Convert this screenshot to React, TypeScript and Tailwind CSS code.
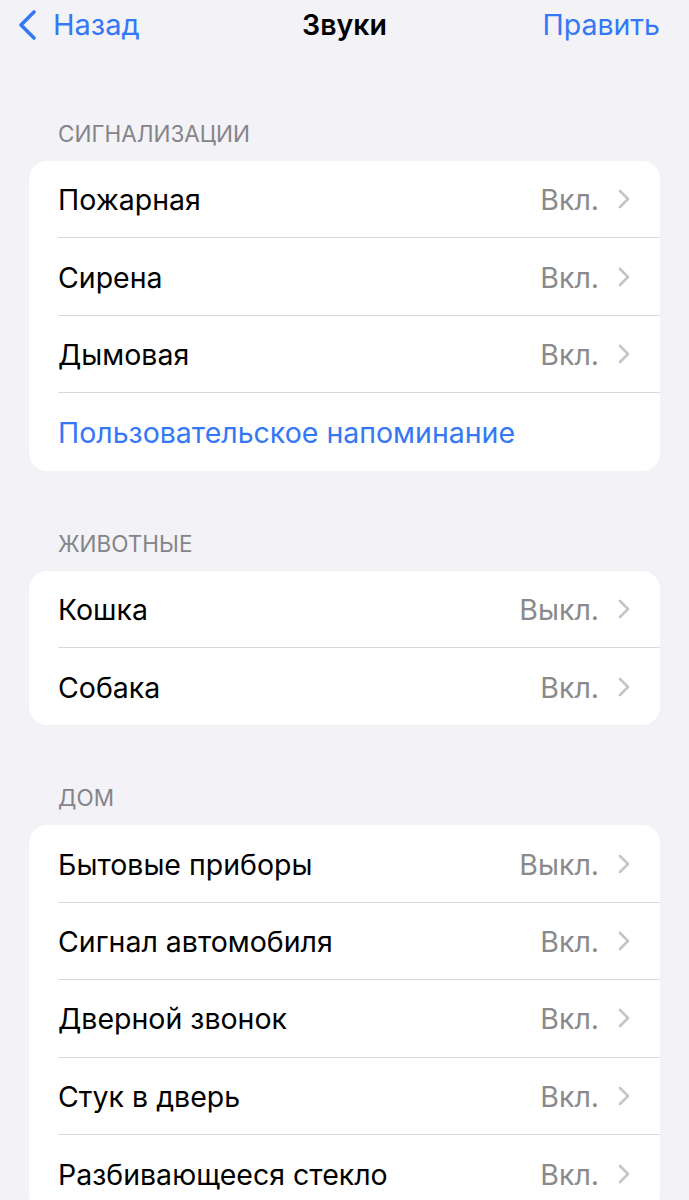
type Item = { label: string; value?: string; link?: boolean };

const sections: { title: string; items: Item[] }[] = [
  {
    title: "СИГНАЛИЗАЦИИ",
    items: [
      { label: "Пожарная", value: "Вкл." },
      { label: "Сирена", value: "Вкл." },
      { label: "Дымовая", value: "Вкл." },
      { label: "Пользовательское напоминание", link: true },
    ],
  },
  {
    title: "ЖИВОТНЫЕ",
    items: [
      { label: "Кошка", value: "Выкл." },
      { label: "Собака", value: "Вкл." },
    ],
  },
  {
    title: "ДОМ",
    items: [
      { label: "Бытовые приборы", value: "Выкл." },
      { label: "Сигнал автомобиля", value: "Вкл." },
      { label: "Дверной звонок", value: "Вкл." },
      { label: "Стук в дверь", value: "Вкл." },
      { label: "Разбивающееся стекло", value: "Вкл." },
    ],
  },
];

function Chevron() {
  return (
    <svg width="14" height="22" viewBox="0 0 14 22" fill="none" className="shrink-0">
      <path d="M3 3l8 8-8 8" stroke="#c4c4c8" strokeWidth="2.6" strokeLinecap="round" strokeLinejoin="round" />
    </svg>
  );
}

function Row({ item, last }: { item: Item; last: boolean }) {
  return (
    <div className="pl-[29px] h-[77.4px]">
      <div
        className={`h-full flex items-center pr-[29px] ${last ? "" : "border-b border-[#d9d9dd]"}`}
      >
        <span className={`flex-1 text-[28.5px] pt-[3px] ${item.link ? "text-[#3478f6]" : "text-black"}`}>
          {item.label}
        </span>
        {item.value && (
          <div className="flex items-center gap-[18px]">
            <span className="text-[28.5px] pt-[3px] text-[#8a8a8e]">{item.value}</span>
            <Chevron />
          </div>
        )}
      </div>
    </div>
  );
}

export default function App() {
  return (
    <div
      className="min-h-screen w-full bg-[#f2f2f7] overflow-hidden"
      style={{ fontFamily: "Inter, 'Noto Sans', sans-serif" }}
    >
      <div className="relative h-[50px] flex items-center justify-between px-[17px]">
        <div className="flex items-center gap-[14px] text-[#3478f6]">
          <svg width="22" height="32" viewBox="0 0 22 32" fill="none">
            <path d="M17 3L4 16l13 13" stroke="#3478f6" strokeWidth="3.6" strokeLinecap="round" strokeLinejoin="round" />
          </svg>
          <span className="text-[29px]">Назад</span>
        </div>
        <span className="absolute left-1/2 -translate-x-1/2 text-[28.5px] font-semibold text-black">Звуки</span>
        <span className="text-[28.5px] text-[#3478f6] pr-[12px]">Править</span>
      </div>

      {sections.map((s, i) => (
        <section key={s.title} className={i === 0 ? "pt-[71px]" : "pt-[60px]"}>
          <div className="px-[58px] h-[26px] mb-[14px] flex items-center text-[22.5px] text-[#858589]">
            {s.title}
          </div>
          <div className="mx-[29px] bg-white rounded-[18px] overflow-hidden">
            {s.items.map((it, j) => (
              <Row key={it.label} item={it} last={j === s.items.length - 1} />
            ))}
          </div>
        </section>
      ))}
    </div>
  );
}
